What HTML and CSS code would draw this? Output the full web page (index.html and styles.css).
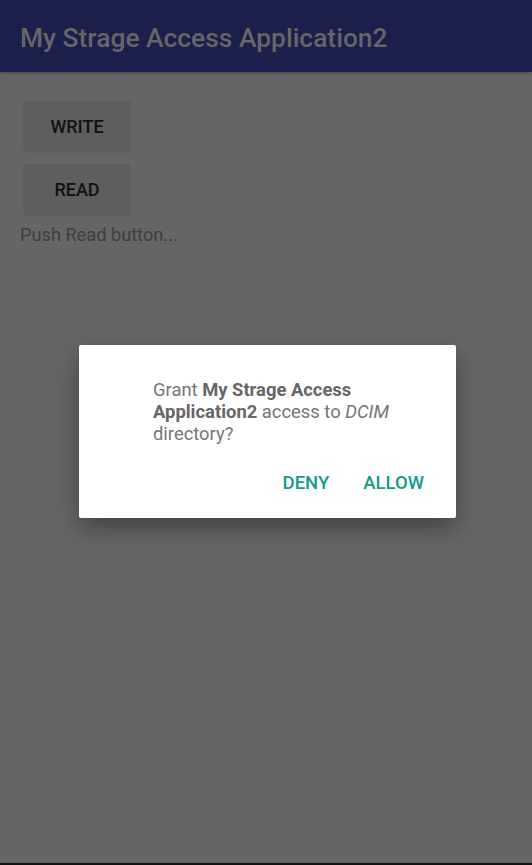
FILE: index.html
```html
<!DOCTYPE html>
<html>
<head>
<meta charset="utf-8">
<link rel="stylesheet" href="styles.css">
</head>
<body>
<div class="screen">
  <header class="appbar"><h1 class="title">My Strage Access Application2</h1></header>
  <main class="content">
    <button class="btn">WRITE</button>
    <button class="btn">READ</button>
    <p class="status">Push Read button...</p>
  </main>
  <div class="dialog">
    <p class="msg">Grant <b>My Strage Access Application2</b> access to <i>DCIM</i> directory?</p>
    <div class="actions">
      <span class="act">DENY</span>
      <span class="act">ALLOW</span>
    </div>
  </div>
  <div class="navline"></div>
</div>
</body>
</html>
```
FILE: styles.css
```css
* { box-sizing: border-box; }
html, body { margin: 0; padding: 0; }
body { width: 532px; height: 865px; background: #666666; font-family: Roboto, "Noto Sans", sans-serif; overflow: hidden; }
.screen { position: relative; width: 532px; height: 865px; display: flex; flex-direction: column; }
.appbar { height: 72px; background: #1a1f4b; display: flex; align-items: center; padding: 4px 0 0 20px; box-shadow: 0 1px 3px rgba(0,0,0,0.3); }
.title { margin: 0; font-size: 26.4px; font-weight: 500; color: #666666; }
.content { flex: 1; padding: 29px 0 0 20px; display: flex; flex-direction: column; align-items: flex-start; }
.btn { width: 106px; height: 50px; margin: 0 0 13px 4px; border: none; border-radius: 3px; background: #5e5e5e; color: #111111; font-family: Roboto, sans-serif; font-size: 18px; font-weight: 500; box-shadow: 0 1px 2px rgba(0,0,0,0.15); }
.btn + .btn { margin-bottom: 10px; }
.status { margin: 0; font-size: 18.2px; color: #3e3e3e; }
.dialog { position: absolute; left: 79px; top: 345px; width: 377px; height: 173px; background: #ffffff; border-radius: 2px; box-shadow: 0 10px 24px rgba(0,0,0,0.35); padding: 34px 24px 0 74px; }
.msg { margin: 0; font-size: 18.4px; line-height: 22px; color: #757575; }
.msg b { font-weight: 700; color: #666666; }
.actions { display: flex; justify-content: flex-end; gap: 34px; margin-top: 27px; padding-right: 8px; }
.act { font-size: 18.5px; font-weight: 500; color: #139a8a; }
.navline { position: absolute; left: 0; bottom: 0; width: 532px; height: 2px; background: #111111; }
```
